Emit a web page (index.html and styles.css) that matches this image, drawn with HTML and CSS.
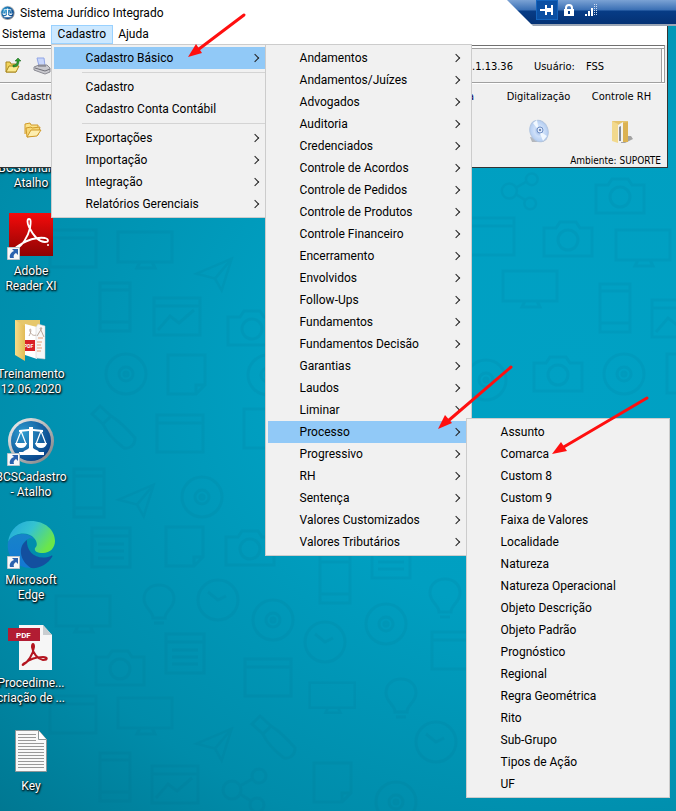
FILE: index.html
```html
<!DOCTYPE html>
<html lang="pt-BR">
<head>
    <meta charset="UTF-8">
    <meta name="viewport" content="width=device-width, initial-scale=1.0">
    <title>Sistema Jurídico Integrado</title>
    <link rel="stylesheet" href="styles.css">
</head>
<body>
    <!-- Shared shapes -->
    <svg class="defs" aria-hidden="true">
        <defs>
            <linearGradient id="redFill" x1="0" y1="0" x2="0" y2="1">
                <stop offset="0" stop-color="#f40b0b"/>
                <stop offset="1" stop-color="#8d0303"/>
            </linearGradient>
            <linearGradient id="rimFill" x1="0" y1="0" x2="1" y2="1">
                <stop offset="0" stop-color="#f5f5f5"/>
                <stop offset="1" stop-color="#77797c"/>
            </linearGradient>
            <radialGradient id="blueFill" cx="0.3" cy="0.3" r="0.8">
                <stop offset="0" stop-color="#2d9bd0"/>
                <stop offset="1" stop-color="#063f86"/>
            </radialGradient>
            <linearGradient id="edgeTop" x1="0" y1="0" x2="1" y2="0.5">
                <stop offset="0" stop-color="#1fa6dc"/>
                <stop offset="0.5" stop-color="#35c3d0"/>
                <stop offset="1" stop-color="#6be64a"/>
            </linearGradient>
            <linearGradient id="edgeLeft" x1="0" y1="0" x2="0" y2="1">
                <stop offset="0" stop-color="#1783c9"/>
                <stop offset="1" stop-color="#1378d4"/>
            </linearGradient>
            <linearGradient id="folderFill" x1="0" y1="0" x2="1" y2="0">
                <stop offset="0" stop-color="#f5dc8a"/>
                <stop offset="1" stop-color="#e2bb55"/>
            </linearGradient>
            <radialGradient id="discFill">
                <stop offset="0" stop-color="#8fb0e4"/>
                <stop offset="0.5" stop-color="#cfe0f8"/>
                <stop offset="1" stop-color="#b3cdf2"/>
            </radialGradient>

            <symbol id="shortcut" viewBox="0 0 13 13">
                <path d="M0.5 0.5h12v12h-12z" fill="#f8f8f8" stroke="#b9c4cc"/>
                <path d="M5 2h6v6L9 6C7 7 6 9 7 11H3C2 8 4 5 7 4z" fill="#2b62ae"/>
            </symbol>
            <symbol id="scales" viewBox="0 0 48 48">
                <circle cx="24" cy="25" r="23" fill="url(#rimFill)"/>
                <circle cx="24" cy="25" r="20" fill="url(#blueFill)"/>
                <path d="M22 11h4v2l10 1v2l-10-1v17c2 2 5 2 6 4h5v3H12v-3h4c2-2 4-2 6-4V15l-10 1v-2l10-1z" fill="#fff"/>
                <path d="M14 15l-5 13M14 15l5 13M34 15l-5 13M34 15l5 13" stroke="#fff" stroke-width="1.200"/>
                <path d="M8 27h12q-1 5-6 5t-6-5zM28 27h12q-1 5-6 5t-6-5z" fill="#fff"/>
            </symbol>

            <!-- Wallpaper doodles -->
            <symbol id="d-phone" viewBox="0 0 60 60"><path d="M14 5h30v48H14zM14 12h30M14 44h30"/></symbol>
            <symbol id="d-monitor" viewBox="0 0 60 60"><path d="M2 8h54v30H2zM24 38l-3 6h18l-3-6"/></symbol>
            <symbol id="d-window" viewBox="0 0 60 60"><path d="M6 10h46v37H6zM6 18h46"/></symbol>
            <symbol id="d-chart" viewBox="0 0 60 60"><path d="M6 10h46v37H6zM6 18h46M10 42l12-14 9 7 15-13"/></symbol>
            <symbol id="d-disc" viewBox="0 0 60 60"><circle cx="30" cy="30" r="20"/><circle cx="30" cy="30" r="7"/><circle cx="30" cy="30" r="2"/></symbol>
            <symbol id="d-note" viewBox="0 0 60 60"><path d="M12 9h37v30l-9 9H12zM40 48v-9h9"/></symbol>
            <symbol id="d-list" viewBox="0 0 60 60"><path d="M12 9h38v39H12zM12 17h38M18 25h26M18 32h26M18 39h26"/></symbol>
            <symbol id="d-camera" viewBox="0 0 60 60"><path d="M6 17h12l4-6h16l4 6h12v28H6z"/><circle cx="30" cy="29" r="10"/></symbol>
            <symbol id="d-plane" viewBox="0 0 60 60"><path d="M8 26l42-18-12 38-8-14zM50 8L30 32"/></symbol>
            <symbol id="d-usb" viewBox="0 0 60 60"><path d="M8 14l8-8 11 10-8 8zM19 24l8-8c10 6 18 15 24 22 0 8-6 11-11 10-9-7-17-14-21-24z"/></symbol>
            <symbol id="d-bulb" viewBox="0 0 60 60"><path d="M23 42c0-7-9-10-9-19 0-9 7-14 15-14s15 5 15 14c0 9-9 12-9 19zM24 47h10"/></symbol>
            <symbol id="d-clock" viewBox="0 0 60 60"><circle cx="30" cy="30" r="20"/><path d="M20 22l10 8 8-4"/></symbol>
            <symbol id="d-share" viewBox="0 0 60 60"><circle cx="16" cy="30" r="9"/><circle cx="43" cy="16" r="7"/><circle cx="41" cy="45" r="7"/><path d="M24 26l12-7M24 34l11 7"/></symbol>
        </defs>
    </svg>

    <div class="desktop">
        <svg class="wallpaper" aria-hidden="true">
            <use href="#d-window" x="44" y="220" width="60" height="60"/>
            <use href="#d-monitor" x="116" y="224" width="60" height="60"/>
            <use href="#d-plane" x="190" y="252" width="50" height="50"/>
            <use href="#d-phone" x="86" y="278" width="60" height="60"/>
            <use href="#d-chart" x="148" y="288" width="60" height="60"/>
            <use href="#d-disc" x="96" y="344" width="60" height="60"/>
            <use href="#d-note" x="156" y="346" width="60" height="60"/>
            <use href="#d-camera" x="222" y="300" width="60" height="60"/>
            <use href="#d-disc" x="238" y="345" width="60" height="60"/>
            <use href="#d-usb" x="84" y="400" width="60" height="60"/>
            <use href="#d-window" x="151" y="405" width="60" height="60"/>
            <use href="#d-note" x="232" y="400" width="60" height="60"/>
            <use href="#d-phone" x="60" y="464" width="60" height="60"/>
            <use href="#d-plane" x="112" y="478" width="50" height="50"/>
            <use href="#d-disc" x="172" y="467" width="60" height="60"/>
            <use href="#d-list" x="80" y="519" width="60" height="60"/>
            <use href="#d-note" x="154" y="518" width="60" height="60"/>
            <use href="#d-camera" x="220" y="520" width="60" height="60"/>
            <use href="#d-monitor" x="54" y="588" width="60" height="60"/>
            <use href="#d-bulb" x="130" y="576" width="60" height="60"/>
            <use href="#d-clock" x="188" y="570" width="60" height="60"/>
            <use href="#d-disc" x="243" y="590" width="60" height="60"/>
            <use href="#d-phone" x="306" y="550" width="60" height="60"/>
            <use href="#d-list" x="360" y="530" width="60" height="60"/>
            <use href="#d-clock" x="295" y="612" width="60" height="60"/>
            <use href="#d-disc" x="356" y="594" width="60" height="60"/>
            <use href="#d-bulb" x="416" y="570" width="60" height="60"/>
            <use href="#d-camera" x="90" y="640" width="60" height="60"/>
            <use href="#d-list" x="154" y="625" width="60" height="60"/>
            <use href="#d-window" x="239" y="649" width="60" height="60"/>
            <use href="#d-monitor" x="308" y="676" width="50" height="50"/>
            <use href="#d-bulb" x="372" y="670" width="60" height="60"/>
            <use href="#d-window" x="426" y="622" width="60" height="60"/>
            <use href="#d-window" x="44" y="686" width="60" height="60"/>
            <use href="#d-monitor" x="116" y="690" width="60" height="60"/>
            <use href="#d-plane" x="190" y="722" width="50" height="50"/>
            <use href="#d-usb" x="244" y="710" width="60" height="60"/>
            <use href="#d-clock" x="406" y="712" width="60" height="60"/>
            <use href="#d-phone" x="86" y="748" width="60" height="60"/>
            <use href="#d-chart" x="146" y="756" width="60" height="60"/>
            <use href="#d-share" x="216" y="760" width="60" height="60"/>
            <use href="#d-note" x="302" y="754" width="60" height="60"/>
            <use href="#d-disc" x="366" y="772" width="60" height="60"/>
            <use href="#d-share" x="496" y="166" width="50" height="50"/>
            <use href="#d-camera" x="590" y="168" width="60" height="60"/>
            <use href="#d-window" x="462" y="208" width="60" height="60"/>
            <use href="#d-camera" x="538" y="211" width="60" height="60"/>
            <use href="#d-monitor" x="614" y="222" width="60" height="60"/>
            <use href="#d-monitor" x="501" y="263" width="60" height="60"/>
            <use href="#d-phone" x="586" y="279" width="60" height="60"/>
            <use href="#d-chart" x="646" y="290" width="60" height="60"/>
            <use href="#d-camera" x="528" y="346" width="60" height="60"/>
            <use href="#d-disc" x="594" y="344" width="60" height="60"/>
            <use href="#d-disc" x="456" y="350" width="60" height="60"/>
            <use href="#d-note" x="655" y="345" width="60" height="60"/>
        </svg>

        <ul class="shortcuts">
            <li>
                <svg class="shortcut-icon" viewBox="0 0 48 48"><use href="#scales" width="48" height="48"/></svg>
                <span>BCSJuridico Atalho</span>
            </li>
            <li>
                <svg class="shortcut-icon" viewBox="0 0 48 48">
                    <path d="M2 3h44v43H2z" fill="url(#redFill)"/>
                    <path d="M9 39c6-3 12-12 14-21 1-6 1-9-1-9s-2 4 0 8c4 8 10 15 16 15 4 0 4-3 0-4-7-1-17 2-24 6-4 2-7 5-5 5z" fill="none" stroke="#fff" stroke-width="1.800"/>
                    <circle cx="41" cy="35" r="1" fill="#fff"/>
                    <use href="#shortcut" x="0" y="37" width="13" height="13"/>
                </svg>
                <span>Adobe<br>Reader XI</span>
            </li>
            <li>
                <svg class="shortcut-icon" viewBox="0 0 48 48">
                    <path d="M8 7h25v34H8z" fill="#e6c76c"/>
                    <path d="M18 11l12 3v32l-12-4z" fill="#fff"/>
                    <path d="M29 14l2-3 7 2v33l-9-1z" fill="#f7f7f7" stroke="#ccc" stroke-width="0.500"/>
                    <path d="M22 23c4-7 0-9 1-5s4 5 6 4M30 23l5-8-2 0 4 9" fill="none" stroke="#b9a79b"/>
                    <path d="M17 27h11v11H17z" fill="#d91f26"/>
                    <text x="17" y="35" class="pdf-mini">PDF</text>
                    <path d="M31 25h5M30 29h5M30 32h4M30 35h5M30 38h4" stroke="#e3a078"/>
                    <path d="M8 7l10 6v35L8 42z" fill="url(#folderFill)"/>
                </svg>
                <span>Treinamento 12.06.2020</span>
            </li>
            <li>
                <svg class="shortcut-icon" viewBox="0 0 48 48">
                    <use href="#scales" width="48" height="48"/>
                    <use href="#shortcut" x="0" y="37" width="13" height="13"/>
                </svg>
                <span>BCSCadastro - Atalho</span>
            </li>
            <li>
                <svg class="shortcut-icon" viewBox="0 0 48 48">
                    <path d="M1 23C3 10 12 2 24 2c14 0 24 9 24 20 0 7-5 12-12 12-6 0-9-2-8-5 3-2 2-7-1-10-5-6-19-7-26 4z" fill="url(#edgeTop)"/>
                    <path d="M1 23c4-9 20-11 26-3-5-2-9 1-11 5-4 8-1 18 8 24C9 49-1 37 1 23z" fill="url(#edgeLeft)"/>
                    <path d="M20 21c-10 7-7 21 4 28 8 1 17-4 21-11 1-1 0-2-1-1-13 5-25-3-24-16z" fill="#134f9f"/>
                    <use href="#shortcut" x="0" y="37" width="13" height="13"/>
                </svg>
                <span>Microsoft Edge</span>
            </li>
            <li>
                <svg class="shortcut-icon" viewBox="0 0 48 48">
                    <path d="M12 3h24l9 10v35H12z" fill="#f6f6f6"/>
                    <path d="M36 3l9 10h-9z" fill="#c9cdd0"/>
                    <path d="M1 6h32v13H1z" fill="#b21c33"/>
                    <text x="9" y="16" class="pdf-tag">PDF</text>
                    <path d="M16 43c5-3 10-10 11-18 0-4-2-4-2 0 1 7 6 12 11 13 5 0 5-3 0-3-7 0-13 2-18 6-2 1-3 2-2 2z" fill="none" stroke="#b3141f" stroke-width="2"/>
                </svg>
                <span>Procedime... criação de ...</span>
            </li>
            <li>
                <svg class="shortcut-icon" viewBox="0 0 48 48">
                    <path d="M8.500 5.500h23l8 9v32h-31z" fill="#f9f9f9" stroke="#8e9799"/>
                    <path d="M31.500 5.500v9h8" fill="#fff" stroke="#8e9799"/>
                    <path d="M11 9.500h18M11 12.500h18M11 15.500h18M11 18.500h26M11 21.500h26M11 24.500h26M11 27.500h26M11 30.500h26M11 33.500h26M11 36.500h26M11 39.500h26M11 42.500h26" stroke="#999"/>
                </svg>
                <span>Key</span>
            </li>
        </ul>

        <div class="app-window">
            <header class="title-bar">
                <svg class="app-icon" viewBox="0 0 48 48"><use href="#scales" width="48" height="48"/></svg>
                <h1>Sistema Jurídico Integrado</h1>
            </header>

            <nav class="menu-bar">
                <div class="menu-item"><button type="button">Sistema</button></div>
                <div class="menu-item open">
                    <button type="button">Cadastro</button>
                    <ul class="menu menu-main">
                        <li class="active">
                            <button type="button" class="has-sub">Cadastro Básico</button>
                            <ul class="menu menu-basic">
                                <li><button type="button" class="has-sub">Andamentos</button></li>
                                <li><button type="button" class="has-sub">Andamentos/Juízes</button></li>
                                <li><button type="button" class="has-sub">Advogados</button></li>
                                <li><button type="button" class="has-sub">Auditoria</button></li>
                                <li><button type="button" class="has-sub">Credenciados</button></li>
                                <li><button type="button" class="has-sub">Controle de Acordos</button></li>
                                <li><button type="button" class="has-sub">Controle de Pedidos</button></li>
                                <li><button type="button" class="has-sub">Controle de Produtos</button></li>
                                <li><button type="button" class="has-sub">Controle Financeiro</button></li>
                                <li><button type="button" class="has-sub">Encerramento</button></li>
                                <li><button type="button" class="has-sub">Envolvidos</button></li>
                                <li><button type="button" class="has-sub">Follow-Ups</button></li>
                                <li><button type="button" class="has-sub">Fundamentos</button></li>
                                <li><button type="button" class="has-sub">Fundamentos Decisão</button></li>
                                <li><button type="button" class="has-sub">Garantias</button></li>
                                <li><button type="button" class="has-sub">Laudos</button></li>
                                <li><button type="button" class="has-sub">Liminar</button></li>
                                <li class="active">
                                    <button type="button" class="has-sub">Processo</button>
                                    <ul class="menu menu-process">
                                        <li><button type="button">Assunto</button></li>
                                        <li><button type="button">Comarca</button></li>
                                        <li><button type="button">Custom 8</button></li>
                                        <li><button type="button">Custom 9</button></li>
                                        <li><button type="button">Faixa de Valores</button></li>
                                        <li><button type="button">Localidade</button></li>
                                        <li><button type="button">Natureza</button></li>
                                        <li><button type="button">Natureza Operacional</button></li>
                                        <li><button type="button">Objeto Descrição</button></li>
                                        <li><button type="button">Objeto Padrão</button></li>
                                        <li><button type="button">Prognóstico</button></li>
                                        <li><button type="button">Regional</button></li>
                                        <li><button type="button">Regra Geométrica</button></li>
                                        <li><button type="button">Rito</button></li>
                                        <li><button type="button">Sub-Grupo</button></li>
                                        <li><button type="button">Tipos de Ação</button></li>
                                        <li><button type="button">UF</button></li>
                                    </ul>
                                </li>
                                <li><button type="button" class="has-sub">Progressivo</button></li>
                                <li><button type="button" class="has-sub">RH</button></li>
                                <li><button type="button" class="has-sub">Sentença</button></li>
                                <li><button type="button" class="has-sub">Valores Customizados</button></li>
                                <li><button type="button" class="has-sub">Valores Tributários</button></li>
                            </ul>
                        </li>
                        <li class="separator"></li>
                        <li><button type="button">Cadastro</button></li>
                        <li><button type="button">Cadastro Conta Contábil</button></li>
                        <li class="separator"></li>
                        <li><button type="button" class="has-sub">Exportações</button></li>
                        <li><button type="button" class="has-sub">Importação</button></li>
                        <li><button type="button" class="has-sub">Integração</button></li>
                        <li><button type="button" class="has-sub">Relatórios Gerenciais</button></li>
                    </ul>
                </div>
                <div class="menu-item"><button type="button">Ajuda</button></div>
            </nav>

            <div class="toolbar">
                <button type="button" class="tool" aria-label="Abrir">
                    <svg width="16" height="16" viewBox="0 0 16 16">
                        <path d="M1 14V4h4l1 2h5v8z" fill="#f2d45c" stroke="#a9871f"/>
                        <path d="M1 14l3-6h10l-3 6z" fill="#fbea8e" stroke="#a9871f"/>
                        <path d="M8 7c3 0 4-1 4-4h-2l3-3 3 3h-2c0 4-2 6-6 6z" fill="#2f9a2f" stroke="#14601a" stroke-width="0.500"/>
                    </svg>
                </button>
                <button type="button" class="tool" aria-label="Imprimir">
                    <svg width="18" height="18" viewBox="0 0 18 18">
                        <path d="M4 1h7l1 8H6z" fill="#c8d6fb" stroke="#91a5e6"/>
                        <path d="M1 10l5-2h8l3 3v4l-5 2-11-4z" fill="#c9c9ce" stroke="#8b8b93"/>
                        <path d="M2 11l10 3 5-2M5 9h8" fill="none" stroke="#6f6f78"/>
                    </svg>
                </button>
                <div class="session">
                    <span>.1.13.36</span>
                    <span class="user-label">Usuário:</span>
                    <span>FSS</span>
                </div>
            </div>

            <div class="modules">
                <button type="button" class="module module-first">
                    Cadastro
                    <svg width="18" height="18" viewBox="0 0 18 18">
                        <path d="M1 13V3l5-1 1 2h7v4" fill="#fbe38a" stroke="#d09a2a"/>
                        <path d="M3 16l-1-9 5-1 1 1 8-1-2 8z" fill="#f7d877" stroke="#d09a2a"/>
                        <path d="M3 16l4-7h10l-4 6z" fill="#fdeeb0" stroke="#d09a2a"/>
                    </svg>
                </button>
                <span class="module module-cut">a</span>
                <button type="button" class="module">
                    Digitalização
                    <svg width="24" height="24" viewBox="0 0 24 24">
                        <path d="M3 18l2 5h11l4-3z" fill="#b4b7bd"/>
                        <ellipse cx="12" cy="12" rx="9" ry="11" fill="url(#discFill)" stroke="#b3c6e0" transform="rotate(-20 12 12)"/>
                        <path d="M12 12L6 4l4-3zM12 12l8 5-4 5z" fill="#f1f8ff"/>
                        <circle cx="13" cy="11" r="3" fill="#dfeafb" stroke="#6f8fc4"/>
                        <circle cx="13" cy="11" r="1" fill="#526d9c"/>
                    </svg>
                </button>
                <button type="button" class="module">
                    Controle RH
                    <svg width="24" height="24" viewBox="0 0 24 24">
                        <path d="M12 17h9l2 3-8 4h-4z" fill="#a3a3a3"/>
                        <path d="M2 2h16v20H2z" fill="#e5c46d"/>
                        <path d="M8 6l5-3v20H8z" fill="#f3f3f1"/>
                        <path d="M9 8l2-1v15H9z" fill="#858b91"/>
                        <path d="M2 2l6 3v19l-6-2z" fill="#f2d98d"/>
                        <path d="M13 4l5-1v20h-5z" fill="#dcb251"/>
                    </svg>
                </button>
            </div>

            <p class="environment">Ambiente: SUPORTE</p>
        </div>

        <!-- Remote session bar -->
        <div class="remote-bar">
            <button type="button" class="pinned" aria-label="Fixar">
                <svg width="14" height="12" viewBox="0 0 14 12"><path d="M0 5h5v2H0zM5 1h2v10H5zM7 4h4v4H7zM11 1h2v10h-2z" fill="#fff"/></svg>
            </button>
            <button type="button" aria-label="Segurança">
                <svg width="12" height="12" viewBox="0 0 12 12"><path d="M3 5V4a3 3 0 0 1 6 0v1" fill="none" stroke="#fff" stroke-width="2"/><path d="M1 5h10v7H1zM5 7v3h2V7z" fill="#fff" fill-rule="evenodd"/></svg>
            </button>
            <button type="button" aria-label="Conexão">
                <svg width="12" height="12" viewBox="0 0 12 12"><path d="M0 10h2v2H0zM3 7h2v5H3zM6 4h2v8H6z" fill="#fff"/><path d="M9.500 0v12M11.500 0v12" stroke="#cfdcf0" stroke-dasharray="1 1"/></svg>
            </button>
        </div>

        <!-- Red pointers -->
        <svg class="pointers" aria-hidden="true">
            <g stroke="#ff0f0f" stroke-width="3" stroke-linecap="round">
                <path d="M244 15L199 49"/>
                <path d="M511 367L448 421"/>
                <path d="M647 398L562 448"/>
            </g>
            <g fill="#ff0f0f">
                <path d="M188 57l8-13 6 9z"/>
                <path d="M438 429l7-14 7 8z"/>
                <path d="M552 454l9-12 6 9z"/>
            </g>
        </svg>
    </div>
</body>
</html>
```
FILE: styles.css
```css
* {
    margin: 0;
    padding: 0;
    box-sizing: border-box;
}

body {
    font-family: Roboto, "Open Sans", sans-serif;
    font-size: 12px;
    color: #000;
}

ul {
    list-style: none;
}

button {
    border: none;
    background: none;
    font: inherit;
    color: inherit;
    cursor: pointer;
}

.defs {
    position: absolute;
    width: 0;
    height: 0;
}

/* Desktop */
.desktop {
    position: relative;
    min-height: 100vh;
    padding-top: 107px;
    overflow: hidden;
    background: radial-gradient(ellipse at 85% 45%, #00a1c4 0%, #009fc1 38%, #008caa 76%, #007690 100%);
}

.wallpaper,
.pointers {
    position: absolute;
    top: 0;
    left: 0;
    width: 100%;
    height: 100%;
    pointer-events: none;
}

.wallpaper {
    fill: none;
    stroke: #00607c;
    stroke-width: 3px;
    opacity: 0.08;
}

.shortcuts {
    position: relative;
    display: grid;
    grid-auto-rows: 103px;
    width: 76px;
    margin-left: -7px;
}

.shortcuts li {
    display: flex;
    flex-direction: column;
    align-items: center;
    gap: 6px;
    line-height: 15px;
    text-align: center;
    color: #fff;
    text-shadow: 1px 1px 2px #000, 0 1px 2px #000;
}

.shortcut-icon {
    width: 48px;
    height: 48px;
    overflow: visible;
}

.pdf-tag {
    font-size: 8px;
    font-weight: bold;
    fill: #fff;
    text-shadow: none;
}

.pdf-mini {
    font-size: 5px;
    font-weight: bold;
    fill: #fff;
    text-shadow: none;
}

/* Application window */
.app-window {
    position: absolute;
    top: 0;
    left: 0;
    right: 8px;
    background: #f0f0f0;
    border-right: 1px solid #333;
    border-bottom: 1px solid #333;
}

.title-bar {
    display: flex;
    align-items: center;
    gap: 5px;
    height: 25px;
    background: #fff;
}

.app-icon {
    width: 15px;
    height: 15px;
}

.title-bar h1 {
    font-size: 12px;
    font-weight: normal;
}

.menu-bar {
    display: flex;
    height: 20px;
    margin-left: -3px;
    background: #fff;
}

.menu-item {
    position: relative;
    height: 19px;
}

.menu-item > button {
    height: 19px;
    padding: 0 5px;
    line-height: 19px;
}

.menu-item.open > button {
    padding: 0 7px;
    background: #cce8ff;
    box-shadow: inset 0 0 0 1px #99d1ff;
}

/* Menus */
.menu {
    position: absolute;
    z-index: 2;
    padding: 2px;
    background: #f1f1f1;
    border: 1px solid #ccc;
}

.menu-main {
    top: 100%;
    left: 0;
    width: 220px;
}

.menu-basic,
.menu-process {
    top: -3px;
    left: calc(100% - 3px);
}

.menu-basic {
    width: 207px;
}

.menu-process {
    width: 204px;
}

.menu li {
    position: relative;
}

.menu button {
    display: flex;
    align-items: center;
    justify-content: space-between;
    width: 100%;
    height: 22px;
    padding: 0 10px 0 32px;
    white-space: nowrap;
}

.menu .active > button {
    background: #91c9f7;
}

.has-sub::after {
    content: "";
    width: 5px;
    height: 5px;
    border-top: 1px solid #222;
    border-right: 1px solid #222;
    transform: rotate(45deg);
}

.menu .separator {
    height: 7px;
    padding: 3px 0 3px 28px;
    background: #d4d4d4 content-box;
}

/* Toolbar */
.toolbar {
    display: flex;
    align-items: center;
    height: 38px;
    margin-right: 2px;
    padding: 4px 0 0 5px;
    border-top: 1px solid #707070;
    border-right: 1px solid #a0a0a0;
    border-bottom: 1px solid #a0a0a0;
    box-shadow: inset 0 2px #fff, inset 0 3px #a0a0a0, inset -2px 0 #fff, inset -3px 0 #a0a0a0, 0 1px #fff;
}

.tool {
    width: 28px;
    height: 18px;
    text-align: left;
}

.tool svg {
    display: block;
}

.session,
.modules,
.environment {
    font-family: "DejaVu Sans Condensed", "DejaVu Sans", sans-serif;
    font-size: 11px;
}

.session {
    display: flex;
    gap: 11px;
    margin-left: auto;
    padding-right: 60px;
}

.user-label {
    margin-left: 10px;
}

.modules {
    display: flex;
    padding: 6px 4px 0 0;
}

.module {
    display: flex;
    flex-direction: column;
    flex-shrink: 0;
    align-items: center;
    gap: 14px;
    width: 83px;
    height: 66px;
    line-height: 16px;
}

.module-first {
    width: 66px;
    margin-right: auto;
}

.module-first svg {
    margin-top: 2px;
}

.module-cut {
    align-items: flex-end;
    padding-right: 23px;
    color: #000060;
}

.environment {
    padding-right: 6px;
    font-size: 10px;
    line-height: 12px;
    text-align: right;
}

/* Remote session bar */
.remote-bar {
    position: absolute;
    z-index: 1;
    top: 0;
    right: 0;
    display: flex;
    width: 169px;
    height: 26px;
    padding-left: 29px;
    border-bottom: 2px solid #9aa5b5;
    background: linear-gradient(#7ba2d4 0, #3a6fb4 10px, #073c86 11px, #043174 100%);
    clip-path: polygon(0 0, 100% 0, 100% 100%, 26px 100%);
}

.remote-bar button {
    display: flex;
    align-items: center;
    justify-content: center;
    width: 22px;
    height: 20px;
}

.remote-bar .pinned {
    background: #0a4fa3;
    border: 1px solid #1464bd;
}

.pointers {
    z-index: 3;
}
```
